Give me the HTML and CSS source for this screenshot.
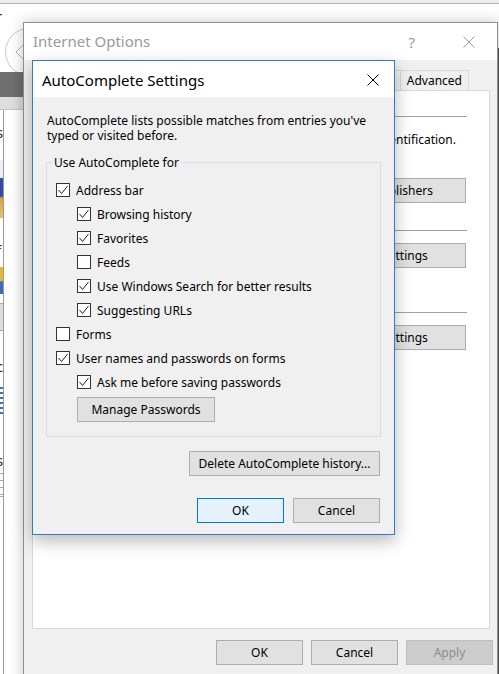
FILE: index.html
```html
<!DOCTYPE html>
<html>
<head>
<meta charset="utf-8">
<title>AutoComplete Settings</title>
<link rel="stylesheet" href="styles.css">
</head>
<body>
<div class="desktop">
  <div class="browser">
    <div class="bd-top"></div>
    <span class="bd-letter l-r">r</span>
    <div class="bd-circle"><svg class="bd-chev" width="10" height="18" viewBox="0 0 10 18"><polyline points="9,1 1,9 9,17" fill="none" stroke="#b5b5b5" stroke-width="1"/></svg></div>
    <div class="bd-band"></div>
    <div class="bd-band2"></div>
    <div class="bd-vline"></div>
    <span class="bd-letter l-s1">s</span>
    <div class="bd-img img1"></div>
    <span class="bd-letter l-f">f</span>
    <div class="bd-img img2"></div>
    <div class="bd-box"></div>
    <span class="bd-letter l-c">c</span>
    <div class="bd-img img3"></div>
    <span class="bd-letter l-s2">s</span>
    <div class="bd-box box2"></div>
    <div class="bd-rline"></div>
  </div>

  <div class="io-window">
    <div class="io-title">
      <span class="io-title-text">Internet Options</span>
      <span class="io-help">?</span>
      <svg class="io-close" width="12" height="12" viewBox="0 0 12 12"><path d="M0.5 0.5 L11.5 11.5 M11.5 0.5 L0.5 11.5" stroke="#9a9a9a" stroke-width="1"/></svg>
    </div>
    <div class="io-body">
      <div class="tabs">
        <span class="tab">Programs</span>
        <span class="tab">Advanced</span>
      </div>
      <div class="panel">
        <div class="sec-head"><span class="sec-line"></span></div>
        <p class="sec-text">Use certificates for encrypted connections and identification.</p>
        <div class="btn-row row1">
          <span class="btn btn-pub">Publishers</span>
        </div>
        <div class="sec-head head2"><span class="sec-line"></span></div>
        <div class="btn-row row2"><span class="btn">Settings</span></div>
        <div class="sec-head head3"><span class="sec-line"></span></div>
        <div class="btn-row row2"><span class="btn">Settings</span></div>
      </div>
      <div class="io-buttons">
        <span class="btn btn-main">OK</span>
        <span class="btn btn-main">Cancel</span>
        <span class="btn btn-main btn-disabled">Apply</span>
      </div>
    </div>
  </div>

  <div class="ac-dialog">
    <div class="ac-title">
      <span class="ac-title-text">AutoComplete Settings</span>
      <svg class="ac-close" width="12" height="12" viewBox="0 0 12 12"><path d="M0.5 0.5 L11.5 11.5 M11.5 0.5 L0.5 11.5" stroke="#000" stroke-width="1"/></svg>
    </div>
    <div class="ac-body">
      <p class="ac-intro">AutoComplete lists possible matches from entries you've typed or visited before.</p>
      <fieldset class="ac-group">
        <legend class="ac-legend">Use AutoComplete for</legend>
        <div class="cb-row"><span class="cb checked"><svg width="14" height="14" viewBox="0 0 14 14"><polyline points="2.5,7 5.5,10.5 11.5,3" fill="none" stroke="#222" stroke-width="1"/></svg></span>Address bar</div>
        <div class="cb-row indent"><span class="cb checked"><svg width="14" height="14" viewBox="0 0 14 14"><polyline points="2.5,7 5.5,10.5 11.5,3" fill="none" stroke="#222" stroke-width="1"/></svg></span>Browsing history</div>
        <div class="cb-row indent"><span class="cb checked"><svg width="14" height="14" viewBox="0 0 14 14"><polyline points="2.5,7 5.5,10.5 11.5,3" fill="none" stroke="#222" stroke-width="1"/></svg></span>Favorites</div>
        <div class="cb-row indent"><span class="cb"></span>Feeds</div>
        <div class="cb-row indent"><span class="cb checked"><svg width="14" height="14" viewBox="0 0 14 14"><polyline points="2.5,7 5.5,10.5 11.5,3" fill="none" stroke="#222" stroke-width="1"/></svg></span>Use Windows Search for better results</div>
        <div class="cb-row indent"><span class="cb checked"><svg width="14" height="14" viewBox="0 0 14 14"><polyline points="2.5,7 5.5,10.5 11.5,3" fill="none" stroke="#222" stroke-width="1"/></svg></span>Suggesting URLs</div>
        <div class="cb-row"><span class="cb"></span>Forms</div>
        <div class="cb-row"><span class="cb checked"><svg width="14" height="14" viewBox="0 0 14 14"><polyline points="2.5,7 5.5,10.5 11.5,3" fill="none" stroke="#222" stroke-width="1"/></svg></span>User names and passwords on forms</div>
        <div class="cb-row indent"><span class="cb checked"><svg width="14" height="14" viewBox="0 0 14 14"><polyline points="2.5,7 5.5,10.5 11.5,3" fill="none" stroke="#222" stroke-width="1"/></svg></span>Ask me before saving passwords</div>
        <div class="manage-row"><span class="btn btn-manage">Manage Passwords</span></div>
      </fieldset>
      <div class="ac-delete-row"><span class="btn btn-delete">Delete AutoComplete history...</span></div>
      <div class="ac-footer">
        <span class="btn btn-main btn-default">OK</span>
        <span class="btn btn-main">Cancel</span>
      </div>
    </div>
  </div>
</div>
</body>
</html>
```
FILE: styles.css
```css
* { box-sizing: border-box; }
html, body { margin: 0; padding: 0; }
body {
  width: 499px;
  height: 674px;
  overflow: hidden;
  background: #ffffff;
  font-family: "Noto Sans", "Open Sans", sans-serif;
  font-size: 12px;
  color: #000;
}
.desktop { position: relative; width: 499px; height: 674px; overflow: hidden; }

/* background browser fragments */
.browser { position: absolute; left: 0; top: 0; width: 499px; height: 674px; background: #fff; z-index: 0; }
.bd-top { position: absolute; left: 0; top: 0; width: 499px; height: 4px; background: #ececec; border-bottom: 1px solid #b4b4b4; }
.bd-letter { position: absolute; left: -4px; font-size: 15px; color: #333; line-height: 16px; }
.l-r { top: 8px; }
.l-s1 { top: 124px; }
.l-f { top: 242px; }
.l-c { top: 358px; }
.l-s2 { top: 452px; }
.bd-circle { position: absolute; left: 5px; top: 28px; width: 48px; height: 48px; border: 1px solid #c9c9c9; border-radius: 50%; }
.bd-chev { position: absolute; left: 9px; top: 14px; }
.bd-band { position: absolute; left: 0; top: 72px; width: 30px; height: 25px; background: #707070; }
.bd-band2 { position: absolute; left: 0; top: 97px; width: 30px; height: 13px; background: #dedede; border-bottom: 1px solid #c4c4c4; }
.bd-vline { position: absolute; left: 3px; top: 110px; width: 1px; height: 564px; background: #9c9c9c; }
.bd-img { position: absolute; left: 0; width: 3px; }
.img1 { top: 160px; height: 58px; background: linear-gradient(#e9eef8 0, #e9eef8 30%, #2b4fa6 32%, #2b4fa6 62%, #d9a23c 66%, #e9c070 100%); }
.img2 { top: 267px; height: 27px; background: linear-gradient(#e8b930 0, #e8b930 50%, #3a6cc0 55%, #3a6cc0 100%); }
.img3 { top: 387px; height: 30px; background: repeating-linear-gradient(#3e6fc2 0, #3e6fc2 2px, #fff 2px, #fff 5px); }
.bd-box { position: absolute; left: 0; top: 303px; width: 3px; height: 28px; background: #dcdcdc; border-top: 1px solid #aaa; border-bottom: 1px solid #aaa; }
.box2 { top: 473px; height: 24px; background: repeating-linear-gradient(#fff 0, #fff 6px, #a8a8a8 6px, #a8a8a8 7px); }
.bd-rline { position: absolute; left: 498px; top: 48px; width: 1px; height: 626px; background: #555; }

/* Internet Options window */
.io-window {
  position: absolute;
  z-index: 1;
  left: 23px;
  top: 22px;
  width: 475px;
  height: 680px;
  background: #f0f0f0;
  border: 1px solid #8f8f8f;
  box-shadow: 0 0 14px rgba(0, 0, 0, 0.22);
  display: flex;
  flex-direction: column;
}
.io-title {
  height: 37px;
  background: #fff;
  display: flex;
  align-items: center;
  padding-left: 9px;
  color: #9a9a9a;
  font-size: 15px;
  flex: none;
}
.io-title-text { margin-top: -1px; }
.io-help { margin-left: auto; margin-right: 48px; font-size: 15px; color: #9a9a9a; }
.io-close { margin-right: 22px; }
.io-body { padding-top: 10px; flex: 1; }
.tabs {
  display: flex;
  justify-content: flex-end;
  margin: 0 7px 0 8px;
  padding-right: 21px;
  height: 20px;
}
.tab {
  flex: none;
  border: 1px solid #d9d9d9;
  border-bottom: none;
  border-left: none;
  padding: 0 6px;
  line-height: 19px;
  background: #f0f0f0;
  white-space: nowrap;
}
.tab:first-child { border-left: 1px solid #d9d9d9; }
.panel {
  margin: 0 7px 0 8px;
  height: 539px;
  background: #fff;
  border: 1px solid #d9d9d9;
}
.sec-head {
  display: flex;
  align-items: center;
  height: 14px;
  margin-top: 18px;
  padding-left: 10px;
  padding-right: 22px;
}
.sec-line { flex: 1; border-top: 1px solid #a0a0a0; }
.sec-text { margin: 9px 0 0 0; text-align: right; padding-right: 33px; line-height: 15px; white-space: nowrap; }
.btn-row { display: flex; justify-content: flex-end; gap: 8px; padding-right: 23px; }
.btn-row .btn { width: 122px; }
.btn-row .btn-pub { width: 125px; }
.row1 { margin-top: 31px; }
.head2 { margin-top: 20px; }
.row2 { margin-top: 6px; }
.head3 { margin-top: 37px; }

.btn {
  display: inline-flex;
  align-items: center;
  justify-content: center;
  height: 25px;
  width: 122px;
  background: #e1e1e1;
  border: 1px solid #adadad;
  white-space: nowrap;
  color: #000;
}
.io-buttons { display: flex; justify-content: flex-end; gap: 8px; margin-top: 11px; padding-right: 4px; }
.btn-main { width: 87px; }
.btn-disabled { background: #cccccc; border-color: #bfbfbf; color: #8d8d8d; }

/* AutoComplete dialog */
.ac-dialog {
  position: absolute;
  z-index: 2;
  left: 32px;
  top: 60px;
  width: 363px;
  height: 475px;
  border: 1px solid #2d7bca;
  background: #f0f0f0;
  box-shadow: 0 6px 16px rgba(0, 0, 0, 0.28);
  display: flex;
  flex-direction: column;
}
.ac-title {
  height: 36px;
  background: #fff;
  display: flex;
  align-items: center;
  padding-left: 9px;
  font-size: 15px;
  flex: none;
}
.ac-title-text { margin-top: 1px; }
.ac-close { margin-left: auto; margin-right: 15px; margin-top: 1px; }
.ac-body { flex: 1; padding: 0 13px; }
.ac-intro { margin: 16px 0 0 1px; line-height: 15px; }
.ac-group {
  margin: 12px 0 0 0;
  padding: 8px 10px 14px 9px;
  border: 1px solid #dcdcdc;
  min-width: 0;
}
.ac-legend { padding: 0 2px; margin-left: -4px; line-height: 15px; }
.cb-row { display: flex; align-items: center; height: 24px; white-space: nowrap; }
.cb-row.indent { padding-left: 21px; }
.cb {
  width: 14px;
  height: 14px;
  border: 1px solid #333;
  background: #fff;
  margin-right: 6px;
  position: relative;
  flex: none;
}
.cb svg { position: absolute; left: -1px; top: -1px; }
.manage-row { padding-left: 21px; margin-top: 3px; }
.btn-manage { width: 138px; }
.ac-delete-row { display: flex; justify-content: flex-end; margin-top: 14px; padding-right: 1px; }
.btn-delete { width: 191px; }
.ac-footer { display: flex; justify-content: flex-end; gap: 9px; margin-top: 22px; padding-right: 1px; }
.btn-default { background: #e5f1fb; border-color: #0078d7; }
```
